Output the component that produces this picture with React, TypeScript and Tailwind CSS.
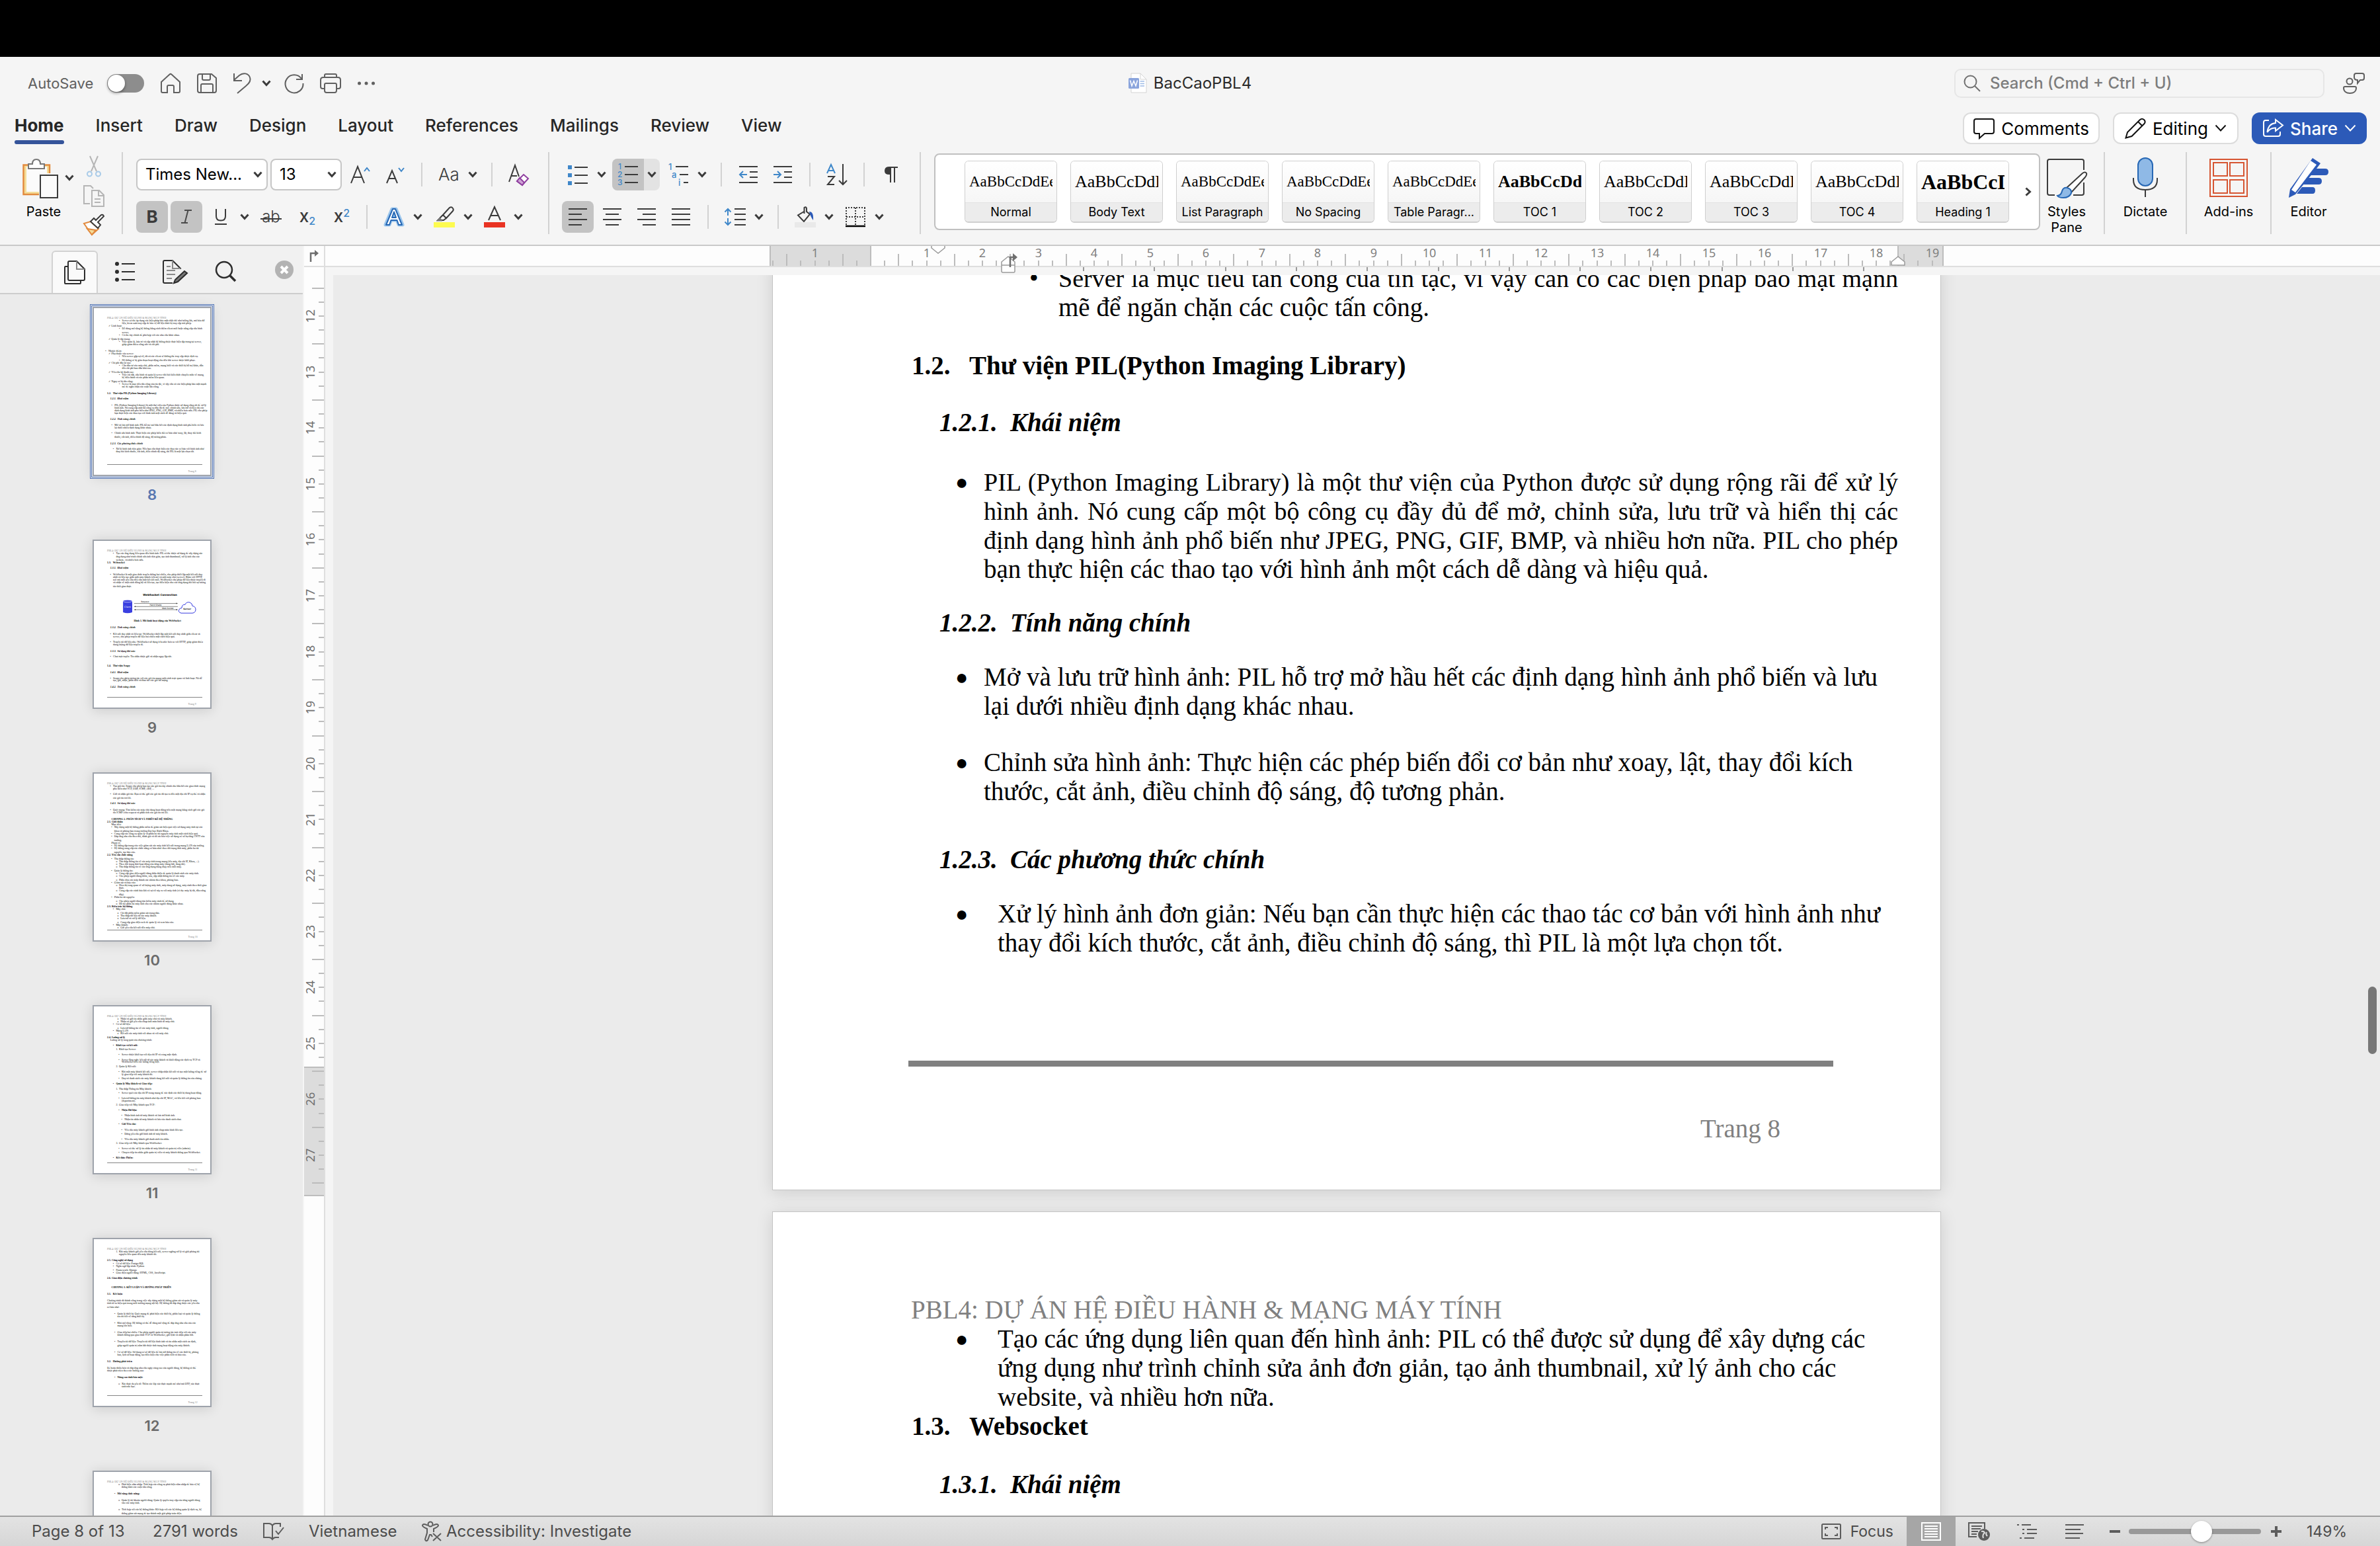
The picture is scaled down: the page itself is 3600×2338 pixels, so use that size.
import React from "react";

type Kids = { children?: React.ReactNode };

const DARK = "#3b3b3b";
const BLUE = "#3f87c9";

function Ico({ w, h, children, s = DARK, sw = 2, cls = "" }: Kids & { w: number; h: number; s?: string; sw?: number; cls?: string }) {
  return (
    <svg width={w} height={h} viewBox={`0 0 ${w} ${h}`} fill="none" stroke={s} strokeWidth={sw} className={`shrink-0 overflow-visible ${cls}`} aria-hidden="true">
      {children}
    </svg>
  );
}

function Chevron({ s = DARK, sw = 3 }: { s?: string; sw?: number }) {
  return (
    <Ico w={14} h={10} s={s} sw={sw}>
      <path d="M1.5 1.5 7 7.5 12.500 1.5" />
    </Ico>
  );
}

/* ---------- Title bar ---------- */

function TitleBar() {
  return (
    <div className="grid h-20 grid-cols-[1fr_auto_1fr] items-center">
      <div className="flex items-center pl-[42px] text-[#606060]">
        <label htmlFor="autosave" className="w-[120px] text-[22px]">AutoSave</label>
        <input
          id="autosave"
          type="checkbox"
          role="switch"
          className="relative h-7 w-14 appearance-none rounded-full bg-[#8d8d8d] before:absolute before:left-px before:top-px before:h-[26px] before:w-[26px] before:rounded-full before:bg-white before:shadow-[0_2px_4px_rgba(0,0,0,0.4)]"
        />
        <button aria-label="Home" className="ml-6">
          <Ico w={32} h={32} s="#606060">
            <path d="M2 14 14.500 2.500Q16 1.300 17.500 2.500L30 14V28Q30 30 28 30H21V21Q21 19 19 19H13Q11 19 11 21V30H4Q2 30 2 28Z" />
          </Ico>
        </button>
        <button aria-label="Save" className="ml-6">
          <Ico w={30} h={30} s="#606060">
            <path d="M4 1H22L29 7V26Q29 29 26 29H4Q1 29 1 26V4Q1 1 4 1ZM8 1V8Q8 10 10 10H18Q20 10 20 8V1M6 29V18Q6 16 8 16H22Q24 16 24 18V29" />
          </Ico>
        </button>
        <button aria-label="Undo" className="ml-6 flex items-center gap-3.5">
          <Ico w={30} h={32} s="#606060">
            <path d="M2 1V12H14M2 11 10 4C16-1 24 1 26 7C28 12 25 16 20 20L7 31" />
          </Ico>
          <Chevron />
        </button>
        <button aria-label="Redo" className="ml-5">
          <Ico w={30} h={30} s="#606060">
            <path d="M27 1V9H18M26 8A13.500 13.500 0 1 0 28.500 15" />
          </Ico>
        </button>
        <button aria-label="Print" className="ml-6">
          <Ico w={32} h={30} s="#606060">
            <path d="M7 6V3Q7 1 9 1H23Q25 1 25 3V6M7 23H4Q1 23 1 20V10Q1 6 5 6H27Q31 6 31 10V20Q31 23 28 23H25M9 15H23Q25 15 25 17V26Q25 29 22 29H10Q7 29 7 26V17Q7 15 9 15Z" />
          </Ico>
        </button>
        <button aria-label="More" className="ml-6">
          <Ico w={28} h={6} s="none">
            <g fill="#606060"><circle cx="3.500" cy="3" r="2.500" /><circle cx="14" cy="3" r="2.500" /><circle cx="24.500" cy="3" r="2.500" /></g>
          </Ico>
        </button>
      </div>
      <div className="flex items-center gap-2.5">
        <Ico w={28} h={32} s="none">
          <path d="M4 1H18L27 10V30H4Z" fill="#fff" stroke="#d4d4d4" strokeWidth="1" />
          <path d="M18 1V10H27" stroke="#d4d4d4" strokeWidth="1" />
          <rect x="0" y="8" width="16" height="16" rx="1.500" fill="#8aa4dc" />
          <path d="M2.500 11.500 5 20 8 12.500 11 20 13.500 11.500" stroke="#fff" strokeWidth="1.500" />
          <path d="M17.500 13H24M17.500 16.500H24M17.500 20H24" stroke="#9dbbe6" strokeWidth="1.500" />
        </Ico>
        <h1 className="text-2xl text-[#2a2a2a]">BacCaoPBL4</h1>
      </div>
      <div className="flex items-center justify-end gap-7 pr-[22px]">
        <label className="flex h-11 w-[560px] items-center gap-3.5 rounded-[10px] border-2 border-[#e6e6e6] px-3">
          <Ico w={26} h={26} s="#707070"><circle cx="10.500" cy="10.500" r="9" /><path d="M17 17 25 25" /></Ico>
          <input type="search" aria-label="Search" placeholder="Search (Cmd + Ctrl + U)" className="min-w-0 flex-1 bg-transparent text-2xl font-medium outline-none placeholder:text-[#7d7d7d]" />
        </label>
        <button aria-label="Presence">
          <Ico w={34} h={34} s="#606060">
            <circle cx="10" cy="14" r="4.500" />
            <path d="M3 22H18Q20 22 20 24C20 29 16 32 10.500 32C5 32 1 29 1 24Q1 22 3 22ZM20 2H29Q32 2 32 5V9Q32 12 29 12H26L22 17V12Q17 12 17 8V5Q17 2 20 2Z" />
          </Ico>
        </button>
      </div>
    </div>
  );
}

/* ---------- Tabs ---------- */

const TABS = ["Home", "Insert", "Draw", "Design", "Layout", "References", "Mailings", "Review", "View"];

function TabRow() {
  return (
    <div className="flex h-14 items-start justify-between pl-[22px] pr-5">
      <nav className="flex items-start gap-12 pt-2 text-[#262626]">
        {TABS.map((t, i) => (
          <button key={t} className="text-[26px] leading-8">
            <span className={i === 0 ? "font-bold" : "font-medium"}>{t}</span>
            <span className={i === 0 ? "mt-1.5 block h-1.5 rounded-full bg-[#35549a]" : "hidden"} />
          </button>
        ))}
      </nav>
      <div className="flex gap-5 pt-1 text-[26px]">
        <button className="flex h-12 items-center gap-2.5 rounded-xl border-2 border-[#dcdcdc] bg-white px-3.5">
          <Ico w={32} h={32} s="#111"><path d="M4 2H28Q31 2 31 5V21Q31 24 28 24H17L9 31V24H4Q1 24 1 21V5Q1 2 4 2Z" /></Ico>
          Comments
        </button>
        <button className="flex h-12 items-center gap-2.5 rounded-xl border-2 border-[#dcdcdc] bg-white px-4">
          <Ico w={32} h={32} s="#111"><path d="M1.500 30.500 4 22 23 3Q26 .5 29 3Q32 6 29.500 9L10.500 28ZM20 6 26.500 12.500" /></Ico>
          Editing
          <Ico w={18} h={12} s="#111"><path d="M1.500 1.500 9 9.500 16.500 1.500" /></Ico>
        </button>
        <button className="flex h-12 items-center gap-2.5 rounded-xl bg-[#2c5ab8] px-4 text-[26px] font-medium text-white">
          <Ico w={32} h={30} s="#fff"><path d="M10 3H5Q2 3 2 6V24Q2 27 5 27H24Q27 27 27 24V20M20 2 31 10.500 20 19V14.500Q12 14 7.500 21Q9 8 20 7Z" /></Ico>
          Share
          <Ico w={18} h={12} s="#fff"><path d="M1.500 1.500 9 9.500 16.500 1.500" /></Ico>
        </button>
      </div>
    </div>
  );
}

/* ---------- Ribbon ---------- */

function GroupRule() {
  return <div className="h-[124px] w-0.5 shrink-0 bg-[#d2d2d2]" />;
}
function Rule() {
  return <div className="mx-3 h-9 w-0.5 shrink-0 self-center bg-[#d2d2d2]" />;
}
function Tool({ label, on, children }: Kids & { label: string; on?: boolean }) {
  return (
    <button aria-label={label} aria-pressed={on} className={`flex h-12 w-12 shrink-0 items-center justify-center rounded-lg ${on ? "bg-[#c3c3c3]" : ""}`}>
      {children}
    </button>
  );
}
function Split({ label, on, children }: Kids & { label: string; on?: boolean }) {
  return (
    <div className={`flex h-12 w-[72px] shrink-0 rounded-lg ${on ? "bg-[#e3e3e3]" : ""}`}>
      <button aria-label={label} className={`flex w-12 items-center justify-center rounded-l-lg ${on ? "bg-[#c3c3c3]" : ""}`}>{children}</button>
      <button aria-label={`${label} options`} className="flex w-6 items-center justify-center"><Chevron /></button>
    </div>
  );
}
function Combo({ label, value, cls }: { label: string; value: string; cls: string }) {
  return (
    <div className={`relative ${cls}`}>
      <select aria-label={label} className="h-12 w-full appearance-none rounded-lg border-2 border-[#c6c6c6] bg-white pl-3 text-2xl text-black">
        <option>{value}</option>
      </select>
      <span className="pointer-events-none absolute right-2 top-[19px]"><Chevron /></span>
    </div>
  );
}
const Glyph = ({ children, cls = "" }: Kids & { cls?: string }) => <span className={`leading-none text-[#3b3b3b] ${cls}`}>{children}</span>;

function PasteGroup() {
  return (
    <div className="flex pl-[34px] pr-6">
      <button className="flex items-start pt-2.5 text-xl leading-6">
        <span className="flex w-16 flex-col items-center">
          <Ico w={64} h={60}>
            <path d="M1.500 9.500H41V54H1.500Z" fill="#f5dd99" stroke="#e28b3f" strokeWidth="2.500" />
            <rect x="6" y="12" width="31" height="38" fill="#fbfbfb" stroke="none" />
            <path d="M9 8H15Q15 1 21 1Q27 1 27 8H33V15H9Z" fill="#fff" stroke="#777" />
            <rect x="25" y="22" width="32" height="38" fill="#f5f5f5" stroke="none" />
            <rect x="27" y="25" width="26" height="34" fill="#fbfbfb" />
          </Ico>
          <span className="mt-2">Paste</span>
        </span>
        <span className="pt-6"><Chevron /></span>
      </button>
      <div className="ml-3 flex w-9 flex-col">
        <button aria-label="Cut" className="flex h-11 items-center justify-center">
          <Ico w={24} h={34} s="#b5b5b5">
            <path d="M6 1 16 24M18 1 8 24" /><g stroke="#a9cbe8"><circle cx="5.500" cy="28" r="3.500" /><circle cx="18.500" cy="28" r="3.500" /></g>
          </Ico>
        </button>
        <button aria-label="Copy" className="flex h-11 items-center justify-center">
          <Ico w={34} h={34} s="#b5b5b5"><path d="M11 29H2V2H12L16 6M14 9H25L32 16V33H14ZM24 9V17H32M18 22H27M18 27H27" /></Ico>
        </button>
        <button aria-label="Format Painter" className="flex h-11 items-center justify-center">
          <Ico w={34} h={34}>
            <path d="M2 15 12 12 24 23 14 32Z" fill="#fff" stroke="#e28b3f" /><path d="M7 23 20 25 14 32Z" fill="#f5dd99" stroke="#e28b3f" />
            <path d="M12 12 17 7 20 10 28 2Q31 1 32 4L23 13 27 17 23 22Z" fill="#fff" />
          </Ico>
        </button>
      </div>
    </div>
  );
}

function FontGroup() {
  return (
    <div className="flex flex-col gap-4 px-5 pt-2.5">
      <div className="flex gap-1">
        <Combo label="Font" value="Times New..." cls="w-[199px]" />
        <Combo label="Font size" value="13" cls="w-[108px]" />
        <Tool label="Increase font size">
          <Ico w={32} h={32}><path d="M2 29 12 4 22 29M6 20H18" /><path d="M22 11 26 6 30 11" stroke={BLUE} /></Ico>
        </Tool>
        <Tool label="Decrease font size">
          <Ico w={30} h={32}><path d="M3 29 11 10 19 29M6 22H16" /><path d="M21 6 25 11 29 6" stroke={BLUE} /></Ico>
        </Tool>
        <Rule />
        <Split label="Change case"><Glyph cls="text-[26px] font-light">Aa</Glyph></Split>
        <Rule />
        <Tool label="Clear formatting">
          <Ico w={34} h={34}><path d="M2 28 11 3 17 20M6 19H14" /><path d="M24 17 31 23 22 33 14 27Z" fill="#fff" stroke="#8f3f9f" /><path d="M18 22 25 29 22 33 14 27Z" fill="#cfa3d6" stroke="#8f3f9f" /></Ico>
        </Tool>
      </div>
      <div className="flex gap-1">
        <Tool label="Bold" on><Glyph cls="text-[26px] font-bold">B</Glyph></Tool>
        <Tool label="Italic" on>
          <Ico w={20} h={24} s="#4a4a4a"><path d="M7 2H18M2 21H12M12.500 2 7.500 21" /></Ico>
        </Tool>
        <Split label="Underline"><Ico w={20} h={28}><path d="M3 2V13Q3 19.500 10 19.500Q17 19.500 17 13V2M1 25H19" /></Ico></Split>
        <Tool label="Strikethrough">
          <span className="relative flex"><Glyph cls="text-2xl font-light">ab</Glyph><span className="absolute -inset-x-0.5 top-3.5 h-0.5 bg-[#3b3b3b]" /></span>
        </Tool>
        <Tool label="Subscript"><Glyph cls="pl-1.5 text-[26px] font-medium">x<sub className="text-base text-[#3f87c9]">2</sub></Glyph></Tool>
        <Tool label="Superscript"><Glyph cls="pl-1.5 text-[26px] font-medium">x<sup className="text-base text-[#3f87c9]">2</sup></Glyph></Tool>
        <Rule />
        <Split label="Text effects">
          <Ico w={34} h={34}>
            <g strokeLinejoin="round"><path d="M4 29 14 5H20L30 29H24L21.500 22H12.500L10 29Z" fill="#8fbfea" stroke="#9cc6ec" strokeWidth="5" />
            <path d="M5 29 15 5H19L29 29H24L21.500 22H12.500L10 29ZM14 18H20L17 9.500Z" fill="#fff" stroke="#2768b5" strokeWidth="2" /></g>
          </Ico>
        </Split>
        <Split label="Highlight">
          <Ico w={32} h={34}><path d="M14 14 24 3Q27 1 29 4Q30.500 6 29 8L19 19ZM14 14 9 19V21L12 22H15L19 19" /><path d="M9 18 4 23H13Z" fill="#777" stroke="#777" strokeWidth="1" /><rect x="0" y="25" width="32" height="8" fill="#fdfb50" stroke="none" /></Ico>
        </Split>
        <Split label="Font color">
          <Ico w={32} h={34}><path d="M7 22 16 2 25 22M10.500 15H21.500" /><rect x="0" y="25" width="32" height="8" fill="#e93323" stroke="none" /></Ico>
        </Split>
      </div>
    </div>
  );
}

function ParagraphGroup() {
  return (
    <div className="flex flex-col gap-4 px-[19px] pt-2.5">
      <div className="flex gap-1">
        <Split label="Bullets">
          <Ico w={32} h={32}><path d="M11 5H31M11 17H31M11 29H31" /><g fill={BLUE} stroke="none"><rect x="1" y="2" width="6" height="6" /><rect x="1" y="14" width="6" height="6" /><rect x="1" y="26" width="6" height="6" /></g></Ico>
        </Split>
        <Split label="Numbering" on>
          <Ico w={32} h={34}><path d="M11 5H31M11 17H31M11 29H31" /><g fill={BLUE} stroke="none" fontSize="12" fontFamily="Inter" fontWeight="500"><text x="1" y="9">1</text><text x="0" y="21">2</text><text x="0" y="33">3</text></g></Ico>
        </Split>
        <Split label="Multilevel list">
          <Ico w={32} h={34}><path d="M12 5H31M18 17H31M24 29H31" /><g fill={BLUE} stroke="none" fontSize="13" fontFamily="Inter" fontWeight="500"><text x="1" y="10">1</text><text x="6" y="22">a</text><text x="16" y="34">i</text></g></Ico>
        </Split>
        <Rule />
        <Tool label="Decrease indent"><Ico w={30} h={30}><path d="M1 3H29M17 11H29M17 19H29M1 27H29" /><path d="M13 15H2M7 10 2 15 7 20" stroke={BLUE} /></Ico></Tool>
        <Tool label="Increase indent"><Ico w={30} h={30}><path d="M1 3H29M17 11H29M17 19H29M1 27H29" /><path d="M1 15H12M7 10 12 15 7 20" stroke={BLUE} /></Ico></Tool>
        <Rule />
        <Tool label="Sort">
          <Ico w={34} h={34}><path d="M2 15 8 2 14 15M4 11H12" stroke={BLUE} /><path d="M3 20H13L3 32H13M26 1V32M20 26 26 32 32 26" /></Ico>
        </Tool>
        <Rule />
        <Tool label="Show formatting"><Ico w={22} h={26}><path d="M10 1H8Q1 1 1 7.500Q1 13 8 13H10Z" fill={DARK} stroke="none" /><path d="M10 2V25M16 2V25M8 2H21" /></Ico></Tool>
      </div>
      <div className="flex gap-1">
        <Tool label="Align left" on><Ico w={30} h={28}><path d="M1 2H29M1 10H21M1 18H29M1 26H21" /></Ico></Tool>
        <Tool label="Center"><Ico w={30} h={28}><path d="M1 2H29M5 10H25M1 18H29M5 26H25" /></Ico></Tool>
        <Tool label="Align right"><Ico w={30} h={28}><path d="M1 2H29M9 10H29M1 18H29M9 26H29" /></Ico></Tool>
        <Tool label="Justify"><Ico w={30} h={28}><path d="M1 2H29M1 10H29M1 18H29M1 26H29" /></Ico></Tool>
        <Rule />
        <Split label="Line spacing">
          <Ico w={34} h={30}><path d="M16 3H33M16 11H33M16 19H33M16 27H33" /><path d="M6 13V3M1.500 7.500 6 3 10.500 7.500M6 17V27M1.500 22.500 6 27 10.500 22.500" stroke={BLUE} /></Ico>
        </Split>
        <Rule />
        <Split label="Shading">
          <Ico w={34} h={34}><path d="M15 9 6 14.500 15 24 24 13 19 9V4Q18 1 15.500 3V12" /><path d="M23 9Q30 9 29 22Q25 17 23 9Z" fill="#2c5ab8" stroke="none" /><rect x="1" y="25" width="32" height="8" fill="#e9e9e9" stroke="none" /></Ico>
        </Split>
        <Split label="Borders">
          <Ico w={32} h={32}><path d="M1 2H31M2 2V28M30 2V28M16 2V28M2 16H30" strokeDasharray="2 2" /><path d="M1 30H31" stroke="#000" strokeWidth="2.500" /></Ico>
        </Split>
      </div>
    </div>
  );
}

const STYLES: [string, string, string][] = [
  ["Normal", "AaBbCcDdEe", "text-[23px]"],
  ["Body Text", "AaBbCcDdEe", "text-[26px]"],
  ["List Paragraph", "AaBbCcDdEe", "text-[23px]"],
  ["No Spacing", "AaBbCcDdEe", "text-[23px]"],
  ["Table Paragr...", "AaBbCcDdEe", "text-[23px]"],
  ["TOC 1", "AaBbCcDdEe", "text-[26px] font-bold"],
  ["TOC 2", "AaBbCcDdEe", "text-[26px]"],
  ["TOC 3", "AaBbCcDdEe", "text-[26px]"],
  ["TOC 4", "AaBbCcDdEe", "text-[26px]"],
  ["Heading 1", "AaBbCcDdEe", "text-[32px] font-bold"],
];

function Gallery() {
  return (
    <div className="mt-0.5 flex h-[116px] min-w-0 flex-1 items-center overflow-hidden rounded-lg border-2 border-[#c0c0c0] bg-white pl-11">
      <div className="flex shrink-0 gap-5">
        {STYLES.map(([name, sample, cls]) => (
          <button key={name} className="flex h-[94px] w-[140px] flex-col overflow-hidden rounded-md border border-b-2 border-[#cfcfcf] bg-white">
            <span className="flex flex-1 items-center self-stretch overflow-hidden bg-linear-to-b from-white to-[#f6f6f6] px-1.5">
              <span className={`flex-1 overflow-hidden whitespace-nowrap text-left font-['Liberation_Serif',serif] leading-8 ${cls}`}>{sample}</span>
            </span>
            <span className="self-stretch whitespace-nowrap border-t border-[#e2e2e2] bg-[#ececec] text-lg leading-7">{name}</span>
          </button>
        ))}
      </div>
      <button aria-label="More styles" className="flex h-full flex-1 items-center justify-center pl-3">
        <Ico w={10} h={14} sw={3}><path d="M1.500 1.500 7.500 7 1.500 12.500" /></Ico>
      </button>
    </div>
  );
}

function BigTool({ cls, label, children }: Kids & { cls: string; label: string }) {
  return (
    <button className={`flex shrink-0 flex-col items-center pt-2 text-xl leading-6 ${cls}`}>
      {children}
      <span className="mt-1.5">{label}</span>
    </button>
  );
}

function Ribbon() {
  return (
    <div className="flex h-[150px] shrink-0 items-start border-b-2 border-[#c9c9c9] pt-2">
      <PasteGroup />
      <GroupRule />
      <FontGroup />
      <GroupRule />
      <ParagraphGroup />
      <GroupRule />
      <div className="w-5 shrink-0" />
      <Gallery />
      <BigTool label="Styles Pane" cls="ml-1 mr-5 w-[72px]">
        <Ico w={64} h={64}>
          <path d="M14 57H6Q3 57 3 54V6Q3 3 6 3H55Q58 3 58 6V19M58 38V54Q58 57 55 57H42" />
          <path d="M32 46 56 24Q60 21 62 24Q63 26 60 30L40 52Z" fill="#fff" />
          <path d="M18 58Q24 57 25 51Q27 45 33 46Q40 48 39 54Q36 61 27 61Q20 61 18 58Z" fill="#8fb9e6" stroke="#2768b5" />
        </Ico>
      </BigTool>
      <GroupRule />
      <BigTool label="Dictate" cls="w-[122px]">
        <Ico w={40} h={64}>
          <rect x="9" y="1" width="22" height="42" rx="11" fill="#8fb9e6" stroke="#2768b5" />
          <path d="M2 31V34Q2 49 20 49Q38 49 38 34V31M20 49V60" />
        </Ico>
      </BigTool>
      <GroupRule />
      <BigTool label="Add-ins" cls="w-[126px]">
        <Ico w={60} h={64} s="#d65532">
          <rect x="2" y="3" width="56" height="56" /><rect x="7" y="8" width="21" height="20" /><rect x="32" y="8" width="21" height="20" /><rect x="7" y="34" width="21" height="20" /><rect x="32" y="34" width="21" height="20" />
        </Ico>
      </BigTool>
      <GroupRule />
      <BigTool label="Editor" cls="mr-[52px] w-[112px]">
        <Ico w={64} h={64} s="none">
          <g fill="#2c5ab8">
            <path d="M40 17H57Q62 17 62 22Q62 27 57 27H33ZM30 31H47Q52 31 52 36Q52 41 47 41H22ZM22 45H38Q42 45 42 50Q42 55 38 55H14Z" />
            <path d="M38 1 50 9 44 17 12 56 2 61 4 48Z" />
          </g>
          <path d="M35 5 44 11 12 53 6 49Z" fill="#fff" />
        </Ico>
      </BigTool>
    </div>
  );
}

/* ---------- Page thumbnails ---------- */

type Row = [number, number, string, string?, string?];

const HEADER = "PBL4: DỰ ÁN HỆ ĐIỀU HÀNH & MẠNG MÁY TÍNH";

const P8: Row[] = [
  [186, 426, "Server có thể áp dụng các biện pháp bảo mật chặt chẽ như tường lửa, mã hóa dữ", "", "•"],
  [224, 426, "liệu, kiểm soát truy cập để bảo vệ dữ liệu khỏi bị truy cập trái phép."],
  [266, 266, "Linh hoạt:", "", "✓"],
  [304, 426, "Dễ dàng mở rộng hệ thống bằng cách thêm client mới hoặc nâng cấp cấu hình", "", "•"],
  [365, 426, "server."],
  [403, 426, "Có thể tùy chỉnh để phù hợp với các nhu cầu khác nhau.", "", "•"],
  [464, 266, "Quản lý tập trung:", "", "✓"],
  [507, 426, "Việc quản lý, bảo trì và cập nhật hệ thống được thực hiện tập trung tại server,", "", "•"],
  [544, 426, "giúp giảm thiểu công sức và chi phí."],
  [643, 219, "Nhược điểm:", "", "•"],
  [686, 266, "Phụ thuộc vào server:", "", "✓"],
  [724, 426, "Nếu server gặp sự cố, tất cả các client sẽ không thể truy cập được dịch vụ.", "", "•"],
  [785, 426, "Hệ thống sẽ bị gián đoạn hoạt động cho đến khi server được khôi phục.", "", "•"],
  [823, 266, "Chi phí đầu tư cao:", "", "✓"],
  [865, 426, "Cần đầu tư vào máy chủ, phần mềm, mạng lưới và các thiết bị hỗ trợ khác, dẫn", "", "•"],
  [903, 426, "đến chi phí ban đầu khá cao."],
  [964, 266, "Yêu cầu kỹ thuật cao:", "", "✓"],
  [1007, 426, "Việc cài đặt, cấu hình và quản lý server đòi hỏi kiến thức chuyên môn về mạng,", "", "•"],
  [1045, 426, "hệ điều hành và các phần mềm liên quan."],
  [1106, 266, "Nguy cơ bị tấn công:", "", "✓"],
  [1148, 426, "Server là mục tiêu tấn công của tin tặc, vì vậy cần có các biện pháp bảo mật mạnh", "", "•"],
  [1186, 426, "mẽ để ngăn chặn các cuộc tấn công."],
  [1285, 201, "1.2.   Thư viện PIL(Python Imaging Library)", "b"],
  [1366, 248, "1.2.1.  Khái niệm", "i"],
  [1465, 312, "PIL (Python Imaging Library) là một thư viện của Python được sử dụng rộng rãi để xử lý", "", "•"],
  [1507, 312, "hình ảnh. Nó cung cấp một bộ công cụ đầy đủ để mở, chỉnh sửa, lưu trữ và hiển thị các"],
  [1545, 312, "định dạng hình ảnh phổ biến như JPEG, PNG, GIF, BMP, và nhiều hơn nữa. PIL cho phép"],
  [1587, 312, "bạn thực hiện các thao tạo với hình ảnh một cách dễ dàng và hiệu quả."],
  [1682, 248, "1.2.2.  Tính năng chính", "i"],
  [1767, 312, "Mở và lưu trữ hình ảnh: PIL hỗ trợ mở hầu hết các định dạng hình ảnh phổ biến và lưu", "", "•"],
  [1804, 312, "lại dưới nhiều định dạng khác nhau."],
  [1885, 312, "Chỉnh sửa hình ảnh: Thực hiện các phép biến đổi cơ bản như xoay, lật, thay đổi kích", "", "•"],
  [1946, 312, "thước, cắt ảnh, điều chỉnh độ sáng, độ tương phản."],
  [2045, 248, "1.2.3.  Các phương thức chính", "i"],
  [2125, 334, "Xử lý hình ảnh đơn giản: Nếu bạn cần thực hiện các thao tác cơ bản với hình ảnh như", "", "•"],
  [2168, 334, "thay đổi kích thước, cắt ảnh, điều chỉnh độ sáng, thì PIL là một lựa chọn tốt."],
];
const P9: Row[] = [
  [186, 334, "Tạo các ứng dụng liên quan đến hình ảnh: PIL có thể được sử dụng để xây dựng các", "", "•"],
  [240, 334, "ứng dụng như trình chỉnh sửa ảnh đơn giản, tạo ảnh thumbnail, xử lý ảnh cho các"],
  [283, 334, "website, và nhiều hơn nữa."],
  [323, 201, "1.3.   Websocket", "b"],
  [403, 248, "1.3.1.  Khái niệm", "i"],
  [507, 291, "WebSocket là một giao thức truyền thông hai chiều, cho phép thiết lập một kết nối duy", "", "•"],
  [545, 291, "nhất và liên tục giữa một máy khách (client) và một máy chủ (server). Khác với HTTP,"],
  [587, 291, "nơi mà mỗi yêu cầu đều cần một kết nối mới, WebSocket cho phép dữ liệu được truyền đi"],
  [625, 291, "và nhận về một cách đồng bộ và liên tục, tạo điều kiện cho các ứng dụng đòi hỏi sự tương"],
  [686, 291, "tác thời gian thực."],
  [1205, 605, "Hình 1. Mô hình hoạt động của WebSocket", "b"],
  [1305, 248, "1.3.2.  Tính năng chính", "i"],
  [1404, 291, "Kết nối duy nhất và liên tục: WebSocket thiết lập một kết nối duy nhất giữa client và", "", "•"],
  [1446, 291, "server, cho phép truyền dữ liệu hai chiều một cách hiệu quả."],
  [1526, 291, "Truyền tải dữ liệu nhẹ: WebSocket sử dụng ít header hơn so với HTTP, giúp giảm thiểu", "", "•"],
  [1564, 291, "dung lượng dữ liệu truyền đi."],
  [1663, 248, "1.3.3.  Sử dụng khi nào", "i"],
  [1743, 291, "Chat trực tuyến: Tin nhắn được gửi và nhận ngay lập tức.", "", "•"],
  [1885, 201, "1.4.   Thư viện Scapy", "b"],
  [1984, 248, "1.4.1.  Khái niệm", "i"],
  [2080, 291, "Scapy cho phép tương tác với các gói tin mạng một cách trực quan và linh hoạt. Nó dễ", "", "•"],
  [2112, 291, "tạo, gửi, nhận, phân tích và thao tác các gói tin mạng."],
  [2206, 248, "1.4.2.  Tính năng chính", "i"],
];
const P10: Row[] = [
  [190, 291, "Tạo gói tin: Scapy cho phép bạn tạo các gói tin tùy chỉnh cho hầu hết các giao thức mạng", "", "•"],
  [229, 291, "phổ biến như TCP, UDP, ICMP, ARP, ..."],
  [308, 291, "Gửi và nhận gói tin: Bạn có thể gửi các gói tin đã tạo ra đến một địa chỉ IP cụ thể và nhận", "", "•"],
  [368, 291, "các gói tin trả lời."],
  [447, 248, "1.4.3.  Sử dụng khi nào", "i"],
  [549, 291, "Quét mạng: Tìm kiếm các máy chủ đang hoạt động trên một mạng bằng cách gửi các gói", "", "•"],
  [589, 291, "tin ICMP echo request và phân tích các gói tin trả lời."],
  [688, 266, "CHƯƠNG 2. PHÂN TÍCH VÀ THIẾT KẾ HỆ THỐNG", "b"],
  [727, 201, "2.1. Giới thiệu", "b"],
  [767, 266, "Mục tiêu:"],
  [806, 308, "Xây dựng một hệ thống phần mềm để giám sát hiệu quả việc sử dụng máy tính tại các", "", "•"],
  [870, 308, "khoa và phòng ban trong trường Đại học Bách Khoa."],
  [909, 308, "Cung cấp các công cụ quản lý và phân bổ tài nguyên máy tính một cách hiệu quả.", "", "•"],
  [949, 308, "Đáp ứng nhu cầu theo dõi, đánh giá và tối ưu hóa việc sử dụng cơ sở hạ tầng CNTT của", "", "•"],
  [1008, 308, "trường."],
  [1048, 266, "Phạm vi:"],
  [1087, 308, "Hệ thống tập trung vào việc giám sát các máy tính kết nối trong mạng LAN của trường.", "", "•"],
  [1127, 308, "Hệ thống cung cấp các chức năng cơ bản như: theo dõi trạng thái máy, phân bổ tài", "", "•"],
  [1186, 308, "nguyên, tạo báo cáo."],
  [1230, 201, "2.2. Yêu cầu chức năng", "b"],
  [1289, 308, "Thu thập thông tin:", "", "•"],
  [1328, 380, "Thu thập thông tin về các máy tính trong mạng (tên máy, địa chỉ IP, Khoa, ...).", "", "o"],
  [1368, 380, "Theo dõi trạng thái hoạt động của từng máy (đang bật, đang tắt).", "", "o"],
  [1407, 380, "Thu thập thông tin về các ứng dụng đang chạy trên mỗi máy.", "", "o"],
  [1467, 308, "Quản lý thông tin:", "", "•"],
  [1506, 380, "Cung cấp giao diện người dùng thân thiện để quản lý danh sách các máy tính.", "", "o"],
  [1550, 380, "Cho phép người dùng thêm, xóa, cập nhật thông tin về các máy.", "", "o"],
  [1609, 380, "Phân chia các máy thành các nhóm theo khoa, phòng ban.", "", "o"],
  [1649, 308, "Giám sát và báo cáo:", "", "•"],
  [1688, 380, "Hiển thị tổng quan về số lượng máy tính, máy đang sử dụng, máy rảnh theo thời gian", "", "o"],
  [1728, 380, "thực."],
  [1767, 380, "Cung cấp các cảnh báo khi có sự cố xảy ra với máy tính (ví dụ: máy bị tắt, đầu cứng", "", "o"],
  [1827, 380, "đầy)."],
  [1866, 308, "Phân bổ tài nguyên:", "", "•"],
  [1925, 380, "Cho phép người dùng tìm kiếm máy rảnh để sử dụng.", "", "o"],
  [1969, 380, "Hỗ trợ phân bổ máy tính cho các nhóm người dùng khác nhau.", "", "o"],
  [2008, 201, "2.3. Kiến trúc hệ thống", "b"],
  [2048, 334, "Máy chủ:", "", "•"],
  [2107, 402, "Cài đặt phần mềm giám sát trung tâm.", "", "o"],
  [2147, 402, "Thu thập dữ liệu từ các máy khách.", "", "o"],
  [2186, 402, "Lưu trữ và xử lý dữ liệu.", "", "o"],
  [2246, 402, "Cung cấp giao diện web để quản lý và xem báo cáo.", "", "o"],
  [2289, 334, "Máy khách:", "", "•"],
  [2329, 402, "Gửi yêu cầu kết nối đến máy chủ.", "", "o"],
];
const P11: Row[] = [
  [189, 402, "Nhận và gửi tin nhắn giữa máy chủ và máy khách.", "", "o"],
  [228, 402, "Nhận và gửi yêu cầu chụp ảnh màn hình từ máy chủ.", "", "o"],
  [268, 334, "Cơ sở dữ liệu:", "", "•"],
  [327, 402, "Lưu trữ thông tin về các máy tính, người dùng.", "", "o"],
  [367, 334, "Mạng LAN:", "", "•"],
  [406, 402, "Kết nối các máy tính với nhau và với máy chủ.", "", "o"],
  [465, 201, "2.4. Luồng xử lý", "b"],
  [505, 248, "Luồng xử lý tổng quát của chương trình:"],
  [588, 334, "Khởi tạo và kết nối:", "b", "•"],
  [647, 380, "Khởi tạo Server:", "", "1."],
  [726, 419, "Server được khởi tạo với địa chỉ IP và cổng mặc định.", "", "•"],
  [803, 419, "Server lắng nghe kết nối từ các máy khách và khởi động các dịch vụ TCP và", "", "•"],
  [833, 419, "WebSocket trên các luồng riêng biệt."],
  [904, 380, "Quản lý Kết nối:", "", "2."],
  [987, 419, "Khi một máy khách kết nối, server chấp nhận kết nối và tạo một luồng riêng để xử", "", "•"],
  [1027, 419, "lý giao tiếp với máy khách đó."],
  [1086, 419, "Duy trì danh sách các máy khách đang kết nối và quản lý thông tin của chúng.", "", "•"],
  [1169, 334, "Quản lý Máy khách và Giao tiếp:", "b", "•"],
  [1244, 380, "Thu thập Thông tin Máy khách:", "", "1."],
  [1308, 419, "Server quét các địa chỉ IP trong mạng để xác định các thiết bị đang hoạt động.", "", "•"],
  [1387, 419, "Lưu trữ thông tin máy khách như địa chỉ IP, MAC, và liên kết với phòng ban", "", "•"],
  [1426, 419, "(department)."],
  [1486, 380, "Giao tiếp với Máy khách qua TCP:", "", "2."],
  [1565, 419, "Nhận Dữ liệu:", "b", "•"],
  [1644, 462, "Nhận hình ảnh từ máy khách và lưu trữ hình ảnh.", "", "•"],
  [1703, 462, "Nhận tin nhắn từ máy khách và lưu vào danh sách chat.", "", "•"],
  [1782, 419, "Gửi Yêu cầu:", "b", "•"],
  [1869, 462, "Yêu cầu máy khách gửi hình ảnh chụp màn hình liên tục.", "", "•"],
  [1925, 462, "Dừng yêu cầu gửi hình ảnh từ máy khách.", "", "•"],
  [2008, 462, "Yêu cầu máy khách gửi danh sách tin nhắn.", "", "•"],
  [2065, 380, "Giao tiếp với Máy khách qua WebSocket:", "", "3."],
  [2146, 419, "Server có thể xử lý tin nhắn từ máy khách và quản trị viên (admin).", "", "•"],
  [2203, 419, "Chuyển tiếp tin nhắn giữa quản trị viên và máy khách thông qua WebSocket.", "", "•"],
  [2289, 334, "Kết thúc Phiên:", "b", "•"],
];
const P12: Row[] = [
  [188, 380, "Khi máy khách gửi yêu cầu đóng kết nối, server ngừng xử lý và giải phóng tài", "", "1."],
  [229, 380, "nguyên liên quan đến máy khách đó."],
  [322, 201, "2.5. Công nghệ sử dụng", "b"],
  [367, 334, "Cơ sở dữ liệu: PostgreSQL", "", "•"],
  [408, 334, "Ngôn ngữ lập trình: Python", "", "•"],
  [465, 334, "Framework: Django", "", "•"],
  [505, 334, "Giao diện người dùng: HTML, CSS, JavaScript.", "", "•"],
  [587, 201, "2.6. Giao diện chương trình", "b"],
  [725, 266, "CHƯƠNG 3. KẾT LUẬN VÀ HƯỚNG PHÁT TRIỂN", "b"],
  [823, 201, "3.1.   Kết luận", "b"],
  [929, 201, "Chương trình đã thành công trong việc xây dựng một hệ thống giám sát và quản lý máy"],
  [969, 201, "tính từ xa hiệu quả trong môi trường mạng nội bộ. Hệ thống đã đáp ứng được các yêu cầu"],
  [1026, 201, "cơ bản như:"],
  [1124, 355, "Quản lý thiết bị: Quét mạng để phát hiện các thiết bị, phân loại và quản lý thông", "", "•"],
  [1169, 355, "tin chi tiết về từng thiết bị."],
  [1266, 355, "Khả mở rộng: Hệ thống có thể dễ dàng mở rộng để đáp ứng nhu cầu của các", "", "•"],
  [1307, 355, "mạng lớn hơn."],
  [1405, 355, "Giao tiếp hai chiều: Cho phép người quản trị tương tác trực tiếp với các máy", "", "•"],
  [1445, 355, "khách thông qua giao thức TCP và WebSocket, gửi lệnh và nhận phản hồi."],
  [1543, 355, "Truyền tải dữ liệu: Truyền tải dữ liệu hình ảnh và tin nhắn một cách ổn định,", "", "•"],
  [1608, 355, "giúp người quản trị nắm bắt được tình trạng hoạt động của máy khách."],
  [1706, 355, "Cơ sở dữ liệu: Sử dụng cơ sở dữ liệu để lưu trữ thông tin về các thiết bị, phòng", "", "•"],
  [1746, 355, "ban, lịch sử hoạt động, tạo điều kiện cho việc phân tích và báo cáo."],
  [1844, 201, "3.2.   Hướng phát triển", "b"],
  [1946, 201, "Để hoàn thiện hơn và đáp ứng nhu cầu ngày càng cao của người dùng, hệ thống có thể"],
  [1986, 201, "được phát triển theo các hướng sau:"],
  [2084, 355, "Nâng cao tính bảo mật:", "b", "•"],
  [2186, 419, "Xác thực đa yếu tố: Thêm các lớp xác thực mạnh mẽ như mã OTP, xác thực", "", "o"],
  [2226, 419, "sinh trắc học."],
];
const P13: Row[] = [
  [187, 419, "Phát hiện xâm nhập: Tích hợp các công cụ phát hiện xâm nhập để bảo vệ hệ", "", "o"],
  [228, 419, "thống khỏi các cuộc tấn công."],
  [325, 355, "Mở rộng chức năng:", "b", "•"],
  [427, 419, "Quản lý tài khoản người dùng: Quản lý quyền truy cập của từng người dùng", "", "o"],
  [468, 419, "vào các máy tính."],
  [565, 419, "Tích hợp với các hệ thống khác: Kết hợp với các hệ thống quản lý dịch vụ, hệ", "", "o"],
  [626, 419, "thống giám sát mạng để tạo thành một giải pháp toàn diện."],
];

function SocketFigure() {
  return (
    <g fontFamily="DejaVu Sans">
      <text x="1001" y="832" fontSize="40" fontWeight="bold" textAnchor="middle">WebSocket Connection</text>
      <path d="M441 910V1080Q510 1104 580 1080V910Z" fill="#3a3fe0" />
      <ellipse cx="510" cy="910" rx="69" ry="18" fill="#3a3fe0" stroke="#fff" strokeWidth="6" />
      <text x="510" y="1012" fontSize="34" fill="#fff" textAnchor="middle">Client</text>
      <path d="M608 946H1262M618 993H1269M618 1040H1262" stroke="#333" strokeWidth="6" />
      <path d="M1269 946 1246 936V956ZM608 993 631 983V1003ZM608 1040 631 1030V1050ZM1269 1040 1246 1030V1050Z" fill="#333" />
      <text x="712" y="934" fontSize="30">Request</text>
      <text x="844" y="980" fontSize="30">Hand Shake</text>
      <text x="1030" y="1026" fontSize="30">Web Socket</text>
      <path d="M1320 1092Q1270 1078 1288 1040Q1300 1014 1330 1014Q1330 960 1380 962Q1400 918 1450 930Q1490 944 1490 984Q1540 990 1540 1040Q1536 1088 1490 1092Z" fill="#fff" stroke="#3a3fe0" strokeWidth="10" />
      <text x="1412" y="1040" fontSize="32" fontWeight="bold" textAnchor="middle">Server</text>
    </g>
  );
}

function Thumb({ n, rows, figure }: { n: number; rows: Row[]; figure?: boolean }) {
  const active = n === 8;
  return (
    <li className="h-[352px] shrink-0">
      <button aria-label={`Page ${n}`} className="mx-auto flex flex-col items-center">
        <span className={`block h-64 w-[180px] border-2 border-[#9ea3ab] bg-white ${active ? "shadow-[0_0_0_1px_#e4e8f0,0_0_0_2px_#5576b5,0_0_0_3px_#e4e8f0,0_0_0_4px_#5576b5,0_2px_18px_rgba(0,0,0,0.12)]" : "shadow-[0_2px_18px_rgba(0,0,0,0.14)]"}`}>
          <svg viewBox="0 0 1760 2520" className="block h-full w-full" fontFamily="Liberation Serif" fontSize="39" fill="#000" aria-hidden="true">
            <text x="201" y="156" fill="#808080">{HEADER}</text>
            {rows.map(([y, x, t, f, b], i) => (
              <g key={i}>
                {b ? <text x={x - 46} y={y + 12}>{b}</text> : null}
                <text x={x} y={y + 12} xmlSpace="preserve" fontWeight={f ? "bold" : "normal"} fontStyle={f === "i" ? "italic" : "normal"}>{t}</text>
              </g>
            ))}
            {figure ? <SocketFigure /> : null}
            <path d="M201 2365H1640" stroke="#777" strokeWidth="9" />
            <text x="1426" y="2476" fill="#808080">Trang {n}</text>
          </svg>
        </span>
        <span className={`mt-3 text-[22px] font-semibold leading-8 ${active ? "text-[#5877b0]" : "text-[#6a6a6a]"}`}>{n}</span>
      </button>
    </li>
  );
}

function Sidebar() {
  const tab = "flex h-16 w-[70px] items-center justify-center";
  return (
    <aside className="flex w-[458px] shrink-0 flex-col bg-[#ebebeb]">
      <div className="flex h-[73px] shrink-0 items-end border-b-2 border-[#cdcdcd] bg-[#f1f1f1] pl-[78px]">
        <div className="flex flex-1 gap-1.5">
          <button aria-label="Thumbnails" className={`${tab} -mb-0.5 rounded-t-md border-2 border-b-0 border-[#d2d2d2] bg-[#fafafa]`}>
            <Ico w={34} h={38} s="#2d2d2d">
              <path d="M6 10H3Q2 10 2 11V35Q2 36 3 36H25Q26 36 26 35V31M9 2H20L32 14V29Q32 31 30 31H9Q7 31 7 29V4Q7 2 9 2Z" /><path d="M20 2V14H32" stroke="#8a8a8a" />
            </Ico>
          </button>
          <button aria-label="Headings" className={tab}>
            <Ico w={32} h={32} s="#2d2d2d"><path d="M11 4H31M11 16H31M11 28H31" /><g fill="#2d2d2d" stroke="none"><circle cx="4" cy="4" r="3" /><circle cx="4" cy="16" r="3" /><circle cx="4" cy="28" r="3" /></g></Ico>
          </button>
          <button aria-label="Review changes" className={tab}>
            <Ico w={40} h={38} s="#2d2d2d">
              <path d="M16 36H4Q2 36 2 34V4Q2 2 4 2H16L28 14V15" /><path d="M16 2V14H28M7 11H13M7 17H20M7 23H20M7 29H15" stroke="#8a8a8a" />
              <path d="M18 36 20 31 34 18 38 21 24 34Z" fill="#777" />
            </Ico>
          </button>
          <button aria-label="Find" className={tab}>
            <Ico w={32} h={34} s="#2d2d2d" sw={2.5}><circle cx="14" cy="14" r="12" /><path d="M23 23 31 31" strokeWidth="3.500" /></Ico>
          </button>
        </div>
        <button aria-label="Close pane" className="mb-[21px] mr-3.5">
          <Ico w={28} h={28} s="#fff" sw={4}><circle cx="14" cy="14" r="14" fill="#b3b3b3" stroke="none" /><path d="M9 9 19 19M19 9 9 19" /></Ico>
        </button>
      </div>
      <ul className="flex min-h-0 flex-1 flex-col overflow-hidden pl-0.5 pt-[19px]">
        <Thumb n={8} rows={P8} />
        <Thumb n={9} rows={P9} figure />
        <Thumb n={10} rows={P10} />
        <Thumb n={11} rows={P11} />
        <Thumb n={12} rows={P12} />
        <Thumb n={13} rows={P13} />
      </ul>
    </aside>
  );
}

/* ---------- Rulers ---------- */

const CM = 84.5;

function HorizontalRuler() {
  const ticks: number[] = [];
  for (let q = -7; q <= 76; q++) if (q !== 0) ticks.push(q);
  return (
    <svg width="1776" height="44" viewBox="0 0 1776 44" className="relative z-10 shrink-0 overflow-visible" aria-hidden="true">
      <rect x="0" y="0" width="153" height="30" fill="#dcdcdc" />
      <rect x="1707" y="0" width="69" height="30" fill="#dcdcdc" />
      <path d="M1 0V30M153 0V30M1707 0V30M1775 0V30" stroke="#bdbdbd" strokeWidth="2" />
      {ticks.map((q) => {
        const x = Math.round(153 + (q * CM) / 4);
        return <rect key={q} x={x - 1} y={Math.abs(q) % 4 === 2 ? 12 : 22} width="2" height={Math.abs(q) % 4 === 2 ? 18 : 8} fill="#bcbcbc" />;
      })}
      <g fontFamily="Noto Sans" fontSize="18" fill="#808080" textAnchor="middle">
        <text x="69" y="17">1</text>
        {Array.from({ length: 19 }, (_, i) => (
          <text key={i} x={Math.round(153 + (i + 1) * CM)} y="17">{i + 1}</text>
        ))}
      </g>
      {Array.from({ length: 12 }, (_, i) => (
        <rect key={i} x={Math.round(474 + i * 107.3)} y="32" width="2" height="6" fill="#999" />
      ))}
      <g fill="#fff" stroke="#9a9a9a" strokeWidth="1.500">
        <path d="M245 0V3L255 11 265 3V0" />
        <path d="M351 29V24L361 16 371 24V29ZM351 29H371V38Q371 40 369 40H353Q351 40 351 38Z" />
        <path d="M1697 29V24L1707 16 1717 24V29Z" />
      </g>
      <path d="M364 32V17H369" stroke="#6e6e6e" strokeWidth="2.500" fill="none" />
      <path d="M368 11 375 17 368 23Z" fill="#6e6e6e" />
    </svg>
  );
}

function VerticalRuler() {
  const marks: number[] = [];
  for (let q = 46; q <= 110; q++) marks.push(q);
  const at = (cm: number) => Math.round(74 + (cm - 12) * 84.6);
  return (
    <svg width="30" height="1888" viewBox="0 0 30 1888" className="shrink-0" aria-hidden="true">
      <rect x="0" y="1210" width="30" height="195" fill="#dcdcdc" />
      <path d="M0 1210H30M0 1404H30" stroke="#bdbdbd" strokeWidth="2" />
      {marks.map((q) => (
        <rect key={q} x={q % 4 === 2 ? 12 : 22} y={at(q / 4) - 1} width={q % 4 === 2 ? 18 : 8} height="2" fill="#bcbcbc" />
      ))}
      <g fontFamily="Noto Sans" fontSize="18" fill="#707070" textAnchor="middle">
        {Array.from({ length: 16 }, (_, i) => (
          <text key={i} transform={`translate(16 ${at(i + 12)}) rotate(-90)`}>{i + 12}</text>
        ))}
      </g>
    </svg>
  );
}

/* ---------- Document ---------- */

function Lines({ lines, indent, mt = "", bullet, justify = 0 }: { lines: string[]; indent: string; mt?: string; bullet?: string; justify?: number }) {
  return (
    <div className={`flex ${mt}`}>
      <span className={`flex h-11 shrink-0 items-center ${bullet === "●" ? "text-[32px]" : ""} ${indent}`}>{bullet}</span>
      <p className="min-w-0 flex-1 whitespace-nowrap">
        {lines.map((l, i) => (
          <span key={i} className={`block ${i < justify ? "text-justify text-[38px] leading-[44px] [text-align-last:justify]" : ""}`}>{l}</span>
        ))}
      </p>
    </div>
  );
}
function H2({ n, t, mt = "" }: { n: string; t: string; mt?: string }) {
  return <h2 className={`flex pl-[210px] font-bold ${mt}`}><span className="w-[87px]">{n}</span>{t}</h2>;
}
function H3({ n, t, mt = "" }: { n: string; t: string; mt?: string }) {
  return <h3 className={`flex pl-[252px] font-bold italic ${mt}`}><span className="w-[107px]">{n}</span>{t}</h3>;
}

const PAGE = "mx-auto w-[1768px] border border-[#c4c4c4] bg-white pr-16 shadow-[0_4px_24px_rgba(0,0,0,0.12)]";

function Document() {
  return (
    <div className="relative flex min-h-0 flex-1 flex-col overflow-hidden bg-[#ebebeb] font-['Liberation_Serif',serif] text-[39px] leading-[44px] text-black">
      <article className={`${PAGE} -mt-[18px] shrink-0`}>
        <Lines indent="pl-[388px] w-[432px]" bullet="•" justify={1} lines={["Server là mục tiêu tấn công của tin tặc, vì vậy cần có các biện pháp bảo mật mạnh", "mẽ để ngăn chặn các cuộc tấn công."]} />
        <H2 n="1.2." t="Thư viện PIL(Python Imaging Library)" mt="mt-11" />
        <H3 n="1.2.1." t="Khái niệm" mt="mt-[42px]" />
        <Lines mt="mt-[46px]" indent="pl-[276px] w-[319px]" bullet="●" justify={3} lines={[
          "PIL (Python Imaging Library) là một thư viện của Python được sử dụng rộng rãi để xử lý",
          "hình ảnh. Nó cung cấp một bộ công cụ đầy đủ để mở, chỉnh sửa, lưu trữ và hiển thị các",
          "định dạng hình ảnh phổ biến như JPEG, PNG, GIF, BMP, và nhiều hơn nữa. PIL cho phép",
          "bạn thực hiện các thao tạo với hình ảnh một cách dễ dàng và hiệu quả.",
        ]} />
        <H3 n="1.2.2." t="Tính năng chính" mt="mt-[37px]" />
        <Lines mt="mt-[38px]" indent="pl-[276px] w-[319px]" bullet="●" lines={["Mở và lưu trữ hình ảnh: PIL hỗ trợ mở hầu hết các định dạng hình ảnh phổ biến và lưu", "lại dưới nhiều định dạng khác nhau."]} />
        <Lines mt="mt-[41px]" indent="pl-[276px] w-[319px]" bullet="●" lines={["Chỉnh sửa hình ảnh: Thực hiện các phép biến đổi cơ bản như xoay, lật, thay đổi kích", "thước, cắt ảnh, điều chỉnh độ sáng, độ tương phản."]} />
        <H3 n="1.2.3." t="Các phương thức chính" mt="mt-[59px]" />
        <Lines mt="mt-[38px]" indent="pl-[276px] w-[340px]" bullet="●" lines={["Xử lý hình ảnh đơn giản: Nếu bạn cần thực hiện các thao tác cơ bản với hình ảnh như", "thay đổi kích thước, cắt ảnh, điều chỉnh độ sáng, thì PIL là một lựa chọn tốt."]} />
        <hr className="ml-[205px] mr-[98px] mt-[156px] h-[9px] border-0 bg-[#808080]" />
        <footer className="mt-[72px] pb-[70px] pr-[178px] text-right text-[#808080]">Trang 8</footer>
      </article>
      <article className={`${PAGE} mt-8 shrink-0 pb-10 pt-[126px]`}>
        <header className="pl-[209px] text-[#808080]">{HEADER}</header>
        <Lines indent="pl-[276px] w-[340px]" bullet="●" lines={["Tạo các ứng dụng liên quan đến hình ảnh: PIL có thể được sử dụng để xây dựng các", "ứng dụng như trình chỉnh sửa ảnh đơn giản, tạo ảnh thumbnail, xử lý ảnh cho các", "website, và nhiều hơn nữa."]} />
        <H2 n="1.3." t="Websocket" />
        <H3 n="1.3.1." t="Khái niệm" mt="mt-11" />
      </article>
      <div className="absolute right-[5px] top-[1076px] h-[102px] w-[13px] rounded-full bg-[#777]" />
    </div>
  );
}

/* ---------- Status bar ---------- */

function StatusBar() {
  const s = "#5c5c5c";
  return (
    <footer className="flex h-[46px] shrink-0 items-center justify-between border-t-2 border-[#a0a0a0] bg-linear-to-b from-[#e3e3e3] to-[#d6d6d6] pl-12 pr-[50px] text-2xl text-[#4c4c4c]">
      <div className="flex h-full items-center">
        <button className="w-[183px] text-left">Page 8 of 13</button>
        <button className="w-[166px] text-left">2791 words</button>
        <button aria-label="Proofing" className="w-[70px]">
          <Ico w={34} h={28} s={s}><path d="M15 5Q13 2 10 2H2V23H10Q13 23 15 26Q17 23 20 23H25M15 5V26M15 5Q17 2 20 2H27V7M20 13 24 18 32 8" /></Ico>
        </button>
        <button className="w-[170px] text-left">Vietnamese</button>
        <button className="flex items-center gap-1.5">
          <Ico w={32} h={32} s={s}>
            <circle cx="14" cy="5" r="3.500" /><path d="M10 7Q3 3 2 7Q2 9 9 12V18L6 28Q7 32 10 29L13 21H15L17 24M18 7Q25 3 26 7Q26 9 19 12V17M18 19 30 30M30 19 18 30" />
          </Ico>
          Accessibility: Investigate
        </button>
      </div>
      <div className="flex h-full items-center">
        <button className="flex items-center gap-3.5 text-[23px]">
          <Ico w={30} h={24} s={s}><rect x="1" y="1" width="28" height="22" rx="1.500" /><path d="M6 9V6H10M20 6H24V9M24 15V18H20M10 18H6V15" /></Ico>
          Focus
        </button>
        <button aria-label="Print layout" aria-pressed="true" className="ml-5 flex h-full w-[74px] items-center justify-center bg-[#a6a6a6]">
          <Ico w={30} h={28} s="#fff"><rect x="1" y="1" width="28" height="26" /><path d="M5 6H25M5 10H25M5 14H25M5 18H25M5 22H25" /></Ico>
        </button>
        <button aria-label="Web layout" className="flex w-[72px] items-center justify-center">
          <Ico w={34} h={30} s={s}><path d="M13 23H1V2H25V11M5 7H21M5 11H19M5 15H15M5 19H13" /><circle cx="24" cy="20" r="9" fill={s} stroke="none" /><path d="M20 15Q24 14 25 17Q21 20 23 25M28 16Q26 19 29 22" stroke="#ddd" /></Ico>
        </button>
        <button aria-label="Outline" className="flex w-[72px] items-center justify-center">
          <Ico w={32} h={24} s={s}><path d="M1 2H4M8 2H22M9 9H12M16 9H31M9 15H12M16 15H31M5 22H8M12 22H27" /></Ico>
        </button>
        <button aria-label="Draft" className="flex w-[72px] items-center justify-center">
          <Ico w={30} h={24} s={s}><path d="M1 2H29M1 9H24M1 15H28M1 22H23" /></Ico>
        </button>
        <button aria-label="Zoom out" className="ml-4 w-[30px]"><Ico w={18} h={18} s={s} sw={4}><path d="M1 9H17" /></Ico></button>
        <input
          type="range"
          aria-label="Zoom"
          defaultValue={56}
          className="h-2 w-[200px] appearance-none rounded-full bg-[#999] [&::-webkit-slider-thumb]:h-8 [&::-webkit-slider-thumb]:w-8 [&::-webkit-slider-thumb]:appearance-none [&::-webkit-slider-thumb]:rounded-full [&::-webkit-slider-thumb]:bg-white [&::-webkit-slider-thumb]:shadow-[0_1px_3px_rgba(0,0,0,0.4)]"
        />
        <button aria-label="Zoom in" className="ml-3.5"><Ico w={18} h={18} s={s} sw={4}><path d="M1 9H17M9 1V17" /></Ico></button>
        <span className="w-[98px] text-right text-[23px]">149%</span>
      </div>
    </footer>
  );
}

export default function App() {
  return (
    <div className="flex h-screen flex-col overflow-hidden bg-[#f5f5f5] font-['Inter',sans-serif] text-black">
      <div className="h-[86px] shrink-0 bg-black" />
      <TitleBar />
      <TabRow />
      <Ribbon />
      <div className="flex min-h-0 flex-1">
        <Sidebar />
        <div className="flex w-[34px] shrink-0 flex-col overflow-hidden border-r-2 border-l-2 border-l-[#f5f5f5] border-r-[#dedede] bg-[#fdfdfd]">
          <button aria-label="Tab stop" className="flex h-8 shrink-0 items-center justify-center border-b-2 border-[#dedede]">
            <Ico w={16} h={20} s="#6e6e6e" sw={2.5}><path d="M3 19V6H10" /><path d="M9 1 15 6 9 11Z" fill="#6e6e6e" stroke="none" /></Ico>
          </button>
          <VerticalRuler />
        </div>
        <div className="flex min-w-0 flex-1 flex-col">
          <div className="flex h-8 shrink-0 justify-center border-b-2 border-[#dedede] bg-[#fdfdfd] pl-3"><HorizontalRuler /></div>
          <div className="h-3 shrink-0" />
          <div className="flex min-h-0 flex-1 pl-3"><Document /></div>
        </div>
      </div>
      <StatusBar />
    </div>
  );
}
